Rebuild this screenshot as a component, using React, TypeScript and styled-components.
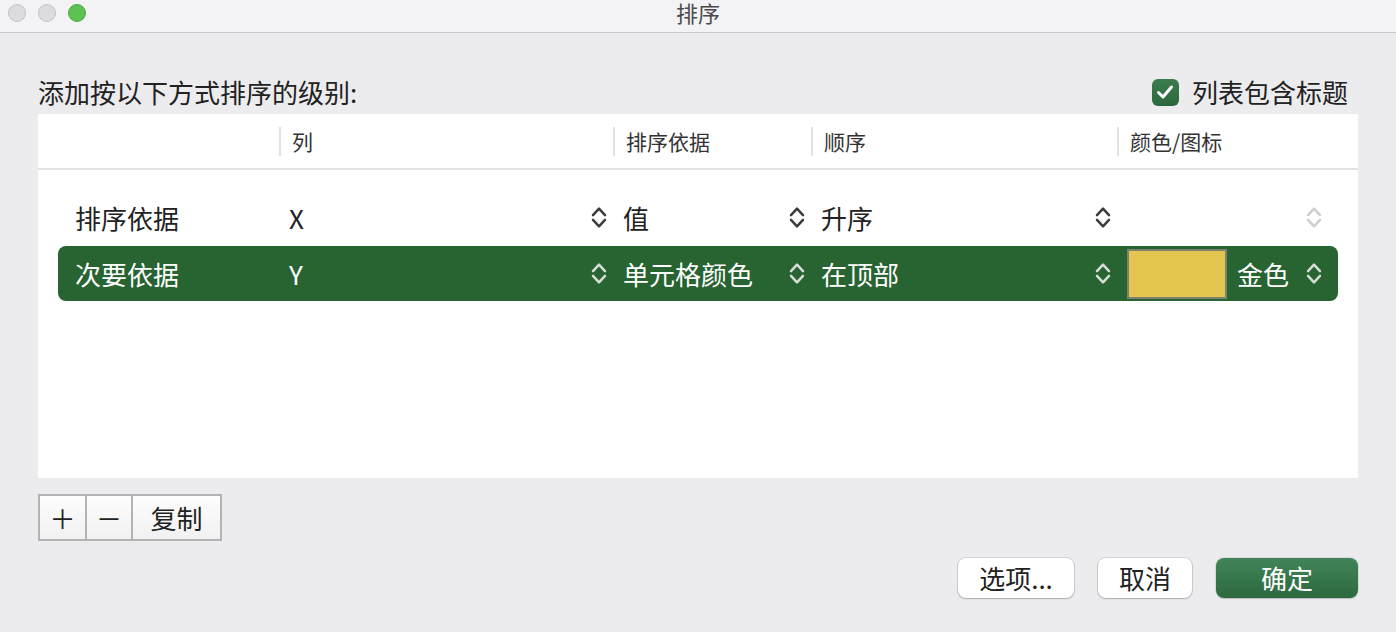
import React from "react";
import styled, { createGlobalStyle } from "styled-components";

const Global = createGlobalStyle`
  html, body { margin: 0; padding: 0; background: #ececee; }
  body { font-family: "Noto Sans CJK SC", "Noto Sans", sans-serif; color: #222; }
  * { box-sizing: border-box; }
`;

const Window = styled.div`
  width: 1396px;
  height: 632px;
  display: flex;
  flex-direction: column;
  background: #ececee;
  overflow: hidden;
`;

const TitleBar = styled.div`
  height: 33px;
  flex: none;
  background: #f3f2f4;
  border-bottom: 1px solid #c9c9cb;
  display: grid;
  grid-template-columns: 1fr auto 1fr;
  align-items: start;
`;

const Lights = styled.div`
  display: flex;
  gap: 12px;
  padding-left: 8px;
  padding-top: 4px;
`;

const Light = styled.span<{ $on?: boolean }>`
  width: 18px;
  height: 18px;
  border-radius: 50%;
  background: ${(p) => (p.$on ? "#5bc253" : "#dcdcde")};
  border: 1px solid ${(p) => (p.$on ? "#4aa942" : "#c3c3c5")};
`;

const Title = styled.div`
  font-size: 22px;
  color: #4a4a4a;
  line-height: 25px;
`;

const Body = styled.div`
  flex: 1;
  display: flex;
  flex-direction: column;
  padding: 37px 38px 0 38px;
`;

const TopRow = styled.div`
  height: 44px;
  display: flex;
  align-items: center;
  justify-content: space-between;
  padding-right: 10px;
`;

const Label = styled.div`
  font-size: 26px;
  color: #222;
  line-height: 1;
`;

const CheckWrap = styled.label`
  display: flex;
  align-items: center;
  gap: 13px;
  font-size: 26px;
  color: #222;
  line-height: 1;
`;

const CheckBox = styled.span`
  width: 27px;
  height: 27px;
  border-radius: 6px;
  background: linear-gradient(#3b7d4d, #2c673b);
  display: flex;
  align-items: center;
  justify-content: center;
`;

const Panel = styled.div`
  height: 364px;
  background: #fff;
  display: flex;
  flex-direction: column;
`;

const COLS = "241px 334px 198px 306px 1fr";

const HeadRow = styled.div`
  height: 56px;
  flex: none;
  display: grid;
  grid-template-columns: ${COLS};
  align-items: center;
  border-bottom: 2px solid #e3e3e5;
`;

const HeadCell = styled.div<{ $divider?: boolean }>`
  height: 29px;
  display: flex;
  align-items: center;
  padding-left: 11px;
  font-size: 21px;
  color: #333;
  border-left: ${(p) => (p.$divider ? "2px solid #e2e2e4" : "none")};
`;

const Rows = styled.div`
  padding: 20px 20px 0 20px;
  display: flex;
  flex-direction: column;
  gap: 1px;
`;

const Row = styled.div<{ $sel?: boolean }>`
  height: 55px;
  display: grid;
  grid-template-columns: 221px 334px 198px 306px 1fr;
  align-items: center;
  border-radius: 8px;
  background: ${(p) => (p.$sel ? "#286332" : "transparent")};
  color: ${(p) => (p.$sel ? "#fff" : "#222")};
  font-size: 26px;
  line-height: 1;
`;

const NameCell = styled.div`
  padding-left: 17px;
`;

const PopCell = styled.div<{ $last?: boolean }>`
  display: flex;
  align-items: center;
  justify-content: space-between;
  padding-left: 10px;
  padding-right: ${(p) => (p.$last ? "16px" : "6px")};
  height: 100%;
`;

const Value = styled.span`
  display: flex;
  align-items: center;
  gap: 10px;
`;

const Swatch = styled.span`
  width: 100px;
  height: 50px;
  flex: none;
  background: #e3c54f;
  border: 2px solid #80806f;
`;

const ChevSvg = styled.svg`
  flex: none;
  width: 16px;
  height: 23px;
  display: block;
`;

const Chev = ({ color }: { color: string }) => (
  <ChevSvg viewBox="0 0 16 23">
    <path d="M2 9.2 L8 2.6 L14 9.2" fill="none" stroke={color} strokeWidth="2.5" strokeLinecap="round" strokeLinejoin="round" />
    <path d="M2 13.8 L8 20.4 L14 13.8" fill="none" stroke={color} strokeWidth="2.5" strokeLinecap="round" strokeLinejoin="round" />
  </ChevSvg>
);

const Toolbar = styled.div`
  margin-top: 16px;
  display: flex;
  align-self: flex-start;
  border: 2px solid #b3b3b5;
  height: 47px;
`;

const ToolBtn = styled.button<{ $w: number }>`
  width: ${(p) => p.$w}px;
  height: 100%;
  border: none;
  border-left: 2px solid #b3b3b5;
  &:first-child { border-left: none; }
  background: linear-gradient(#fdfdfd, #f1f1f2);
  font-family: inherit;
  font-size: 26px;
  color: #222;
  padding: 0;
  display: flex;
  align-items: center;
  justify-content: center;
  line-height: 1;
`;

const Footer = styled.div`
  margin-top: 17px;
  display: flex;
  justify-content: flex-end;
  gap: 24px;
`;

const DlgBtn = styled.button<{ $w: number; $primary?: boolean }>`
  width: ${(p) => p.$w}px;
  height: 40px;
  border-radius: 8px;
  border: none;
  font-family: inherit;
  font-size: 26px;
  line-height: 1;
  padding: 0;
  display: flex;
  align-items: center;
  justify-content: center;
  color: ${(p) => (p.$primary ? "#fff" : "#222")};
  background: ${(p) => (p.$primary ? "linear-gradient(#42845a, #2c693d)" : "#fff")};
  box-shadow: ${(p) =>
    p.$primary
      ? "0 0 0 1px rgba(0,0,0,0.08), 0 1px 1px rgba(0,0,0,0.15)"
      : "0 0 0 1px rgba(0,0,0,0.1), 0 1px 2px rgba(0,0,0,0.2)"};
`;

export default function App() {
  return (
    <Window>
      <Global />
      <TitleBar>
        <Lights>
          <Light />
          <Light />
          <Light $on />
        </Lights>
        <Title>排序</Title>
        <div />
      </TitleBar>
      <Body>
        <TopRow>
          <Label>添加按以下方式排序的级别:</Label>
          <CheckWrap>
            <CheckBox>
              <svg width="18" height="16" viewBox="0 0 18 16">
                <path d="M2.5 8.5 L7 13 L15.5 3" fill="none" stroke="#fff" strokeWidth="3" strokeLinecap="round" strokeLinejoin="round" />
              </svg>
            </CheckBox>
            列表包含标题
          </CheckWrap>
        </TopRow>
        <Panel>
          <HeadRow>
            <HeadCell />
            <HeadCell $divider>列</HeadCell>
            <HeadCell $divider>排序依据</HeadCell>
            <HeadCell $divider>顺序</HeadCell>
            <HeadCell $divider>颜色/图标</HeadCell>
          </HeadRow>
          <Rows>
            <Row>
              <NameCell>排序依据</NameCell>
              <PopCell>
                <span>X</span>
                <Chev color="#3c3c3c" />
              </PopCell>
              <PopCell>
                <span>值</span>
                <Chev color="#3c3c3c" />
              </PopCell>
              <PopCell>
                <span>升序</span>
                <Chev color="#3c3c3c" />
              </PopCell>
              <PopCell $last>
                <span />
                <Chev color="#cfcfcf" />
              </PopCell>
            </Row>
            <Row $sel>
              <NameCell>次要依据</NameCell>
              <PopCell>
                <span>Y</span>
                <Chev color="#d6ddd7" />
              </PopCell>
              <PopCell>
                <span>单元格颜色</span>
                <Chev color="#d6ddd7" />
              </PopCell>
              <PopCell>
                <span>在顶部</span>
                <Chev color="#d6ddd7" />
              </PopCell>
              <PopCell $last>
                <Value>
                  <Swatch />
                  金色
                </Value>
                <Chev color="#d6ddd7" />
              </PopCell>
            </Row>
          </Rows>
        </Panel>
        <Toolbar>
          <ToolBtn $w={45}>＋</ToolBtn>
          <ToolBtn $w={46}>－</ToolBtn>
          <ToolBtn $w={89}>复制</ToolBtn>
        </Toolbar>
        <Footer>
          <DlgBtn $w={116}>选项...</DlgBtn>
          <DlgBtn $w={94}>取消</DlgBtn>
          <DlgBtn $w={142} $primary>确定</DlgBtn>
        </Footer>
      </Body>
    </Window>
  );
}
